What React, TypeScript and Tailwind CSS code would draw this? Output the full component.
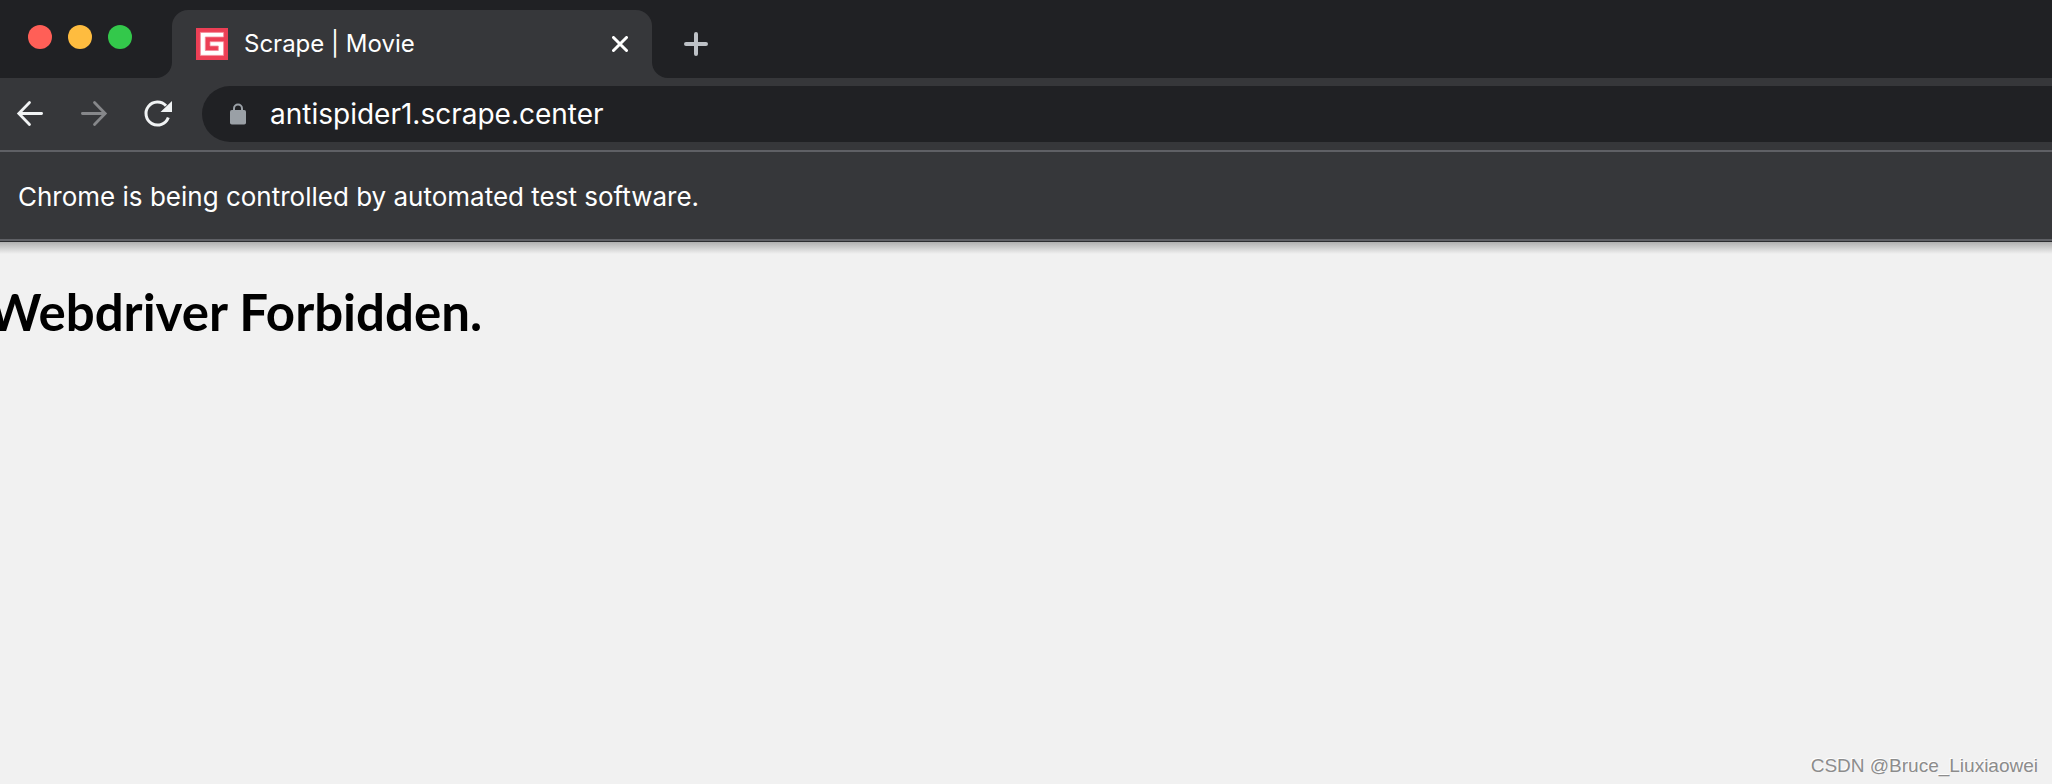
function TrafficLights() {
  return (
    <div className="flex gap-4 pl-7 pt-[25px]">
      <button aria-label="Close window" className="size-6 rounded-full bg-[#ff5f57]" />
      <button aria-label="Minimize window" className="size-6 rounded-full bg-[#febc3f]" />
      <button aria-label="Zoom window" className="size-6 rounded-full bg-[#33c84b]" />
    </div>
  );
}

function TabCurve({ flip = false }: { flip?: boolean }) {
  return (
    <svg viewBox="0 0 16 16" className={flip ? 'size-4 shrink-0 self-end -scale-x-100' : 'size-4 shrink-0 self-end'}>
      <path d="M16 0v16H0A16 16 0 0 0 16 0z" fill="#36373a" />
    </svg>
  );
}

function Favicon() {
  return (
    <svg viewBox="0 0 32 32" className="size-8 shrink-0">
      <rect width="32" height="32" fill="#ec3f55" />
      <path d="M4.400 4.400h23.200v4.600H9.300v13.500h13V18H14v-4.300h13.600v13.700H4.400z" fill="#fff" stroke="#f58c9a" strokeWidth="0.800" />
    </svg>
  );
}

function TabStrip() {
  return (
    <div className="flex h-[78px] bg-[#202124]">
      <TrafficLights />
      <div className="flex pl-6 pt-[10px]">
        <TabCurve />
        <div className="flex w-[480px] items-center rounded-t-2xl bg-[#36373a] pl-6 pr-4 pb-4 pt-4">
          <Favicon />
          <span className="flex-1 pl-4 text-2xl text-white">Scrape | Movie</span>
          <button aria-label="Close tab" className="p-2">
            <svg viewBox="0 0 16 16" className="size-4" fill="none" stroke="#fff" strokeWidth="3" strokeLinecap="round">
              <path d="M1.500 1.500l13 13M14.500 1.500l-13 13" />
            </svg>
          </button>
        </div>
        <TabCurve flip />
      </div>
      <button aria-label="New tab" className="self-start px-4 pt-8">
        <svg viewBox="0 0 24 24" className="size-6" fill="none" stroke="#bdc1c6" strokeWidth="4" strokeLinecap="round">
          <path d="M12 2v20M2 12h20" />
        </svg>
      </button>
    </div>
  );
}

function Arrow({ flip = false }: { flip?: boolean }) {
  return (
    <svg
      viewBox="0 0 32 32"
      className={flip ? 'size-8 -scale-x-100' : 'size-8'}
      fill="none"
      stroke="currentColor"
      strokeWidth="2.800"
      strokeLinecap="round"
      strokeLinejoin="miter"
    >
      <path d="M15.500 4.500L4.800 15.500l10.700 11M5 15.500h22.600" />
    </svg>
  );
}

function Toolbar() {
  return (
    <div className="flex h-[72px] items-center bg-[#36373a] pl-[14px]">
      <button aria-label="Back" className="text-[#f1f3f4]">
        <Arrow />
      </button>
      <button aria-label="Forward" className="ml-8 text-[#86878a]" disabled>
        <Arrow flip />
      </button>
      <button aria-label="Reload" className="ml-8">
        <svg viewBox="0 0 32 32" className="size-8" fill="none">
          <path d="M26.300 19.500A11.500 11.500 0 1 1 24 7.800" stroke="#f1f3f4" strokeWidth="3" />
          <path d="M30 3v11H18.500z" fill="#f1f3f4" />
        </svg>
      </button>
      <div className="ml-7 flex h-14 flex-1 items-center rounded-l-full bg-[#202124] pl-7">
        <svg viewBox="0 0 16 22" className="h-[22px] w-4 shrink-0">
          <path d="M4 8V5.500a4 4 0 0 1 8 0V8" fill="none" stroke="#9aa0a6" strokeWidth="2" />
          <rect y="7" width="16" height="14.500" rx="1.800" fill="#9aa0a6" />
        </svg>
        <input
          type="text"
          aria-label="Address"
          defaultValue="antispider1.scrape.center"
          className="ml-6 min-w-0 flex-1 bg-transparent text-[28px] text-white outline-none"
        />
      </div>
    </div>
  );
}

export default function App() {
  return (
    <div className="flex min-h-screen flex-col overflow-hidden bg-[#f1f1f1] font-['Inter',sans-serif]">
      <header>
        <TabStrip />
        <Toolbar />
        <div className="border-y-2 border-[#5f6065] bg-[#36373a] px-[18px] pb-6 pt-[26px] text-[26px]/[37px] text-white">
          Chrome is being controlled by automated test software.
        </div>
        <div className="h-px bg-[#2c2d30]" />
        <div className="h-3 bg-linear-to-b from-[#b0b0b0] to-[#f1f1f1]" />
      </header>
      <main className="flex-1">
        {/* the page is scrolled a few pixels to the right */}
        <h1 className="-ml-3 pt-[26px] font-['Lato',sans-serif] text-[51px]/[64px] font-bold text-black">
          Webdriver Forbidden.
        </h1>
      </main>
      <footer className="self-end pb-1 pr-[14px] font-['Liberation_Sans',sans-serif] text-[19px]/[28px] text-[#8c8c8c] [text-shadow:-1px_-1px_0_#fff]">
        CSDN @Bruce_Liuxiaowei
      </footer>
    </div>
  );
}
